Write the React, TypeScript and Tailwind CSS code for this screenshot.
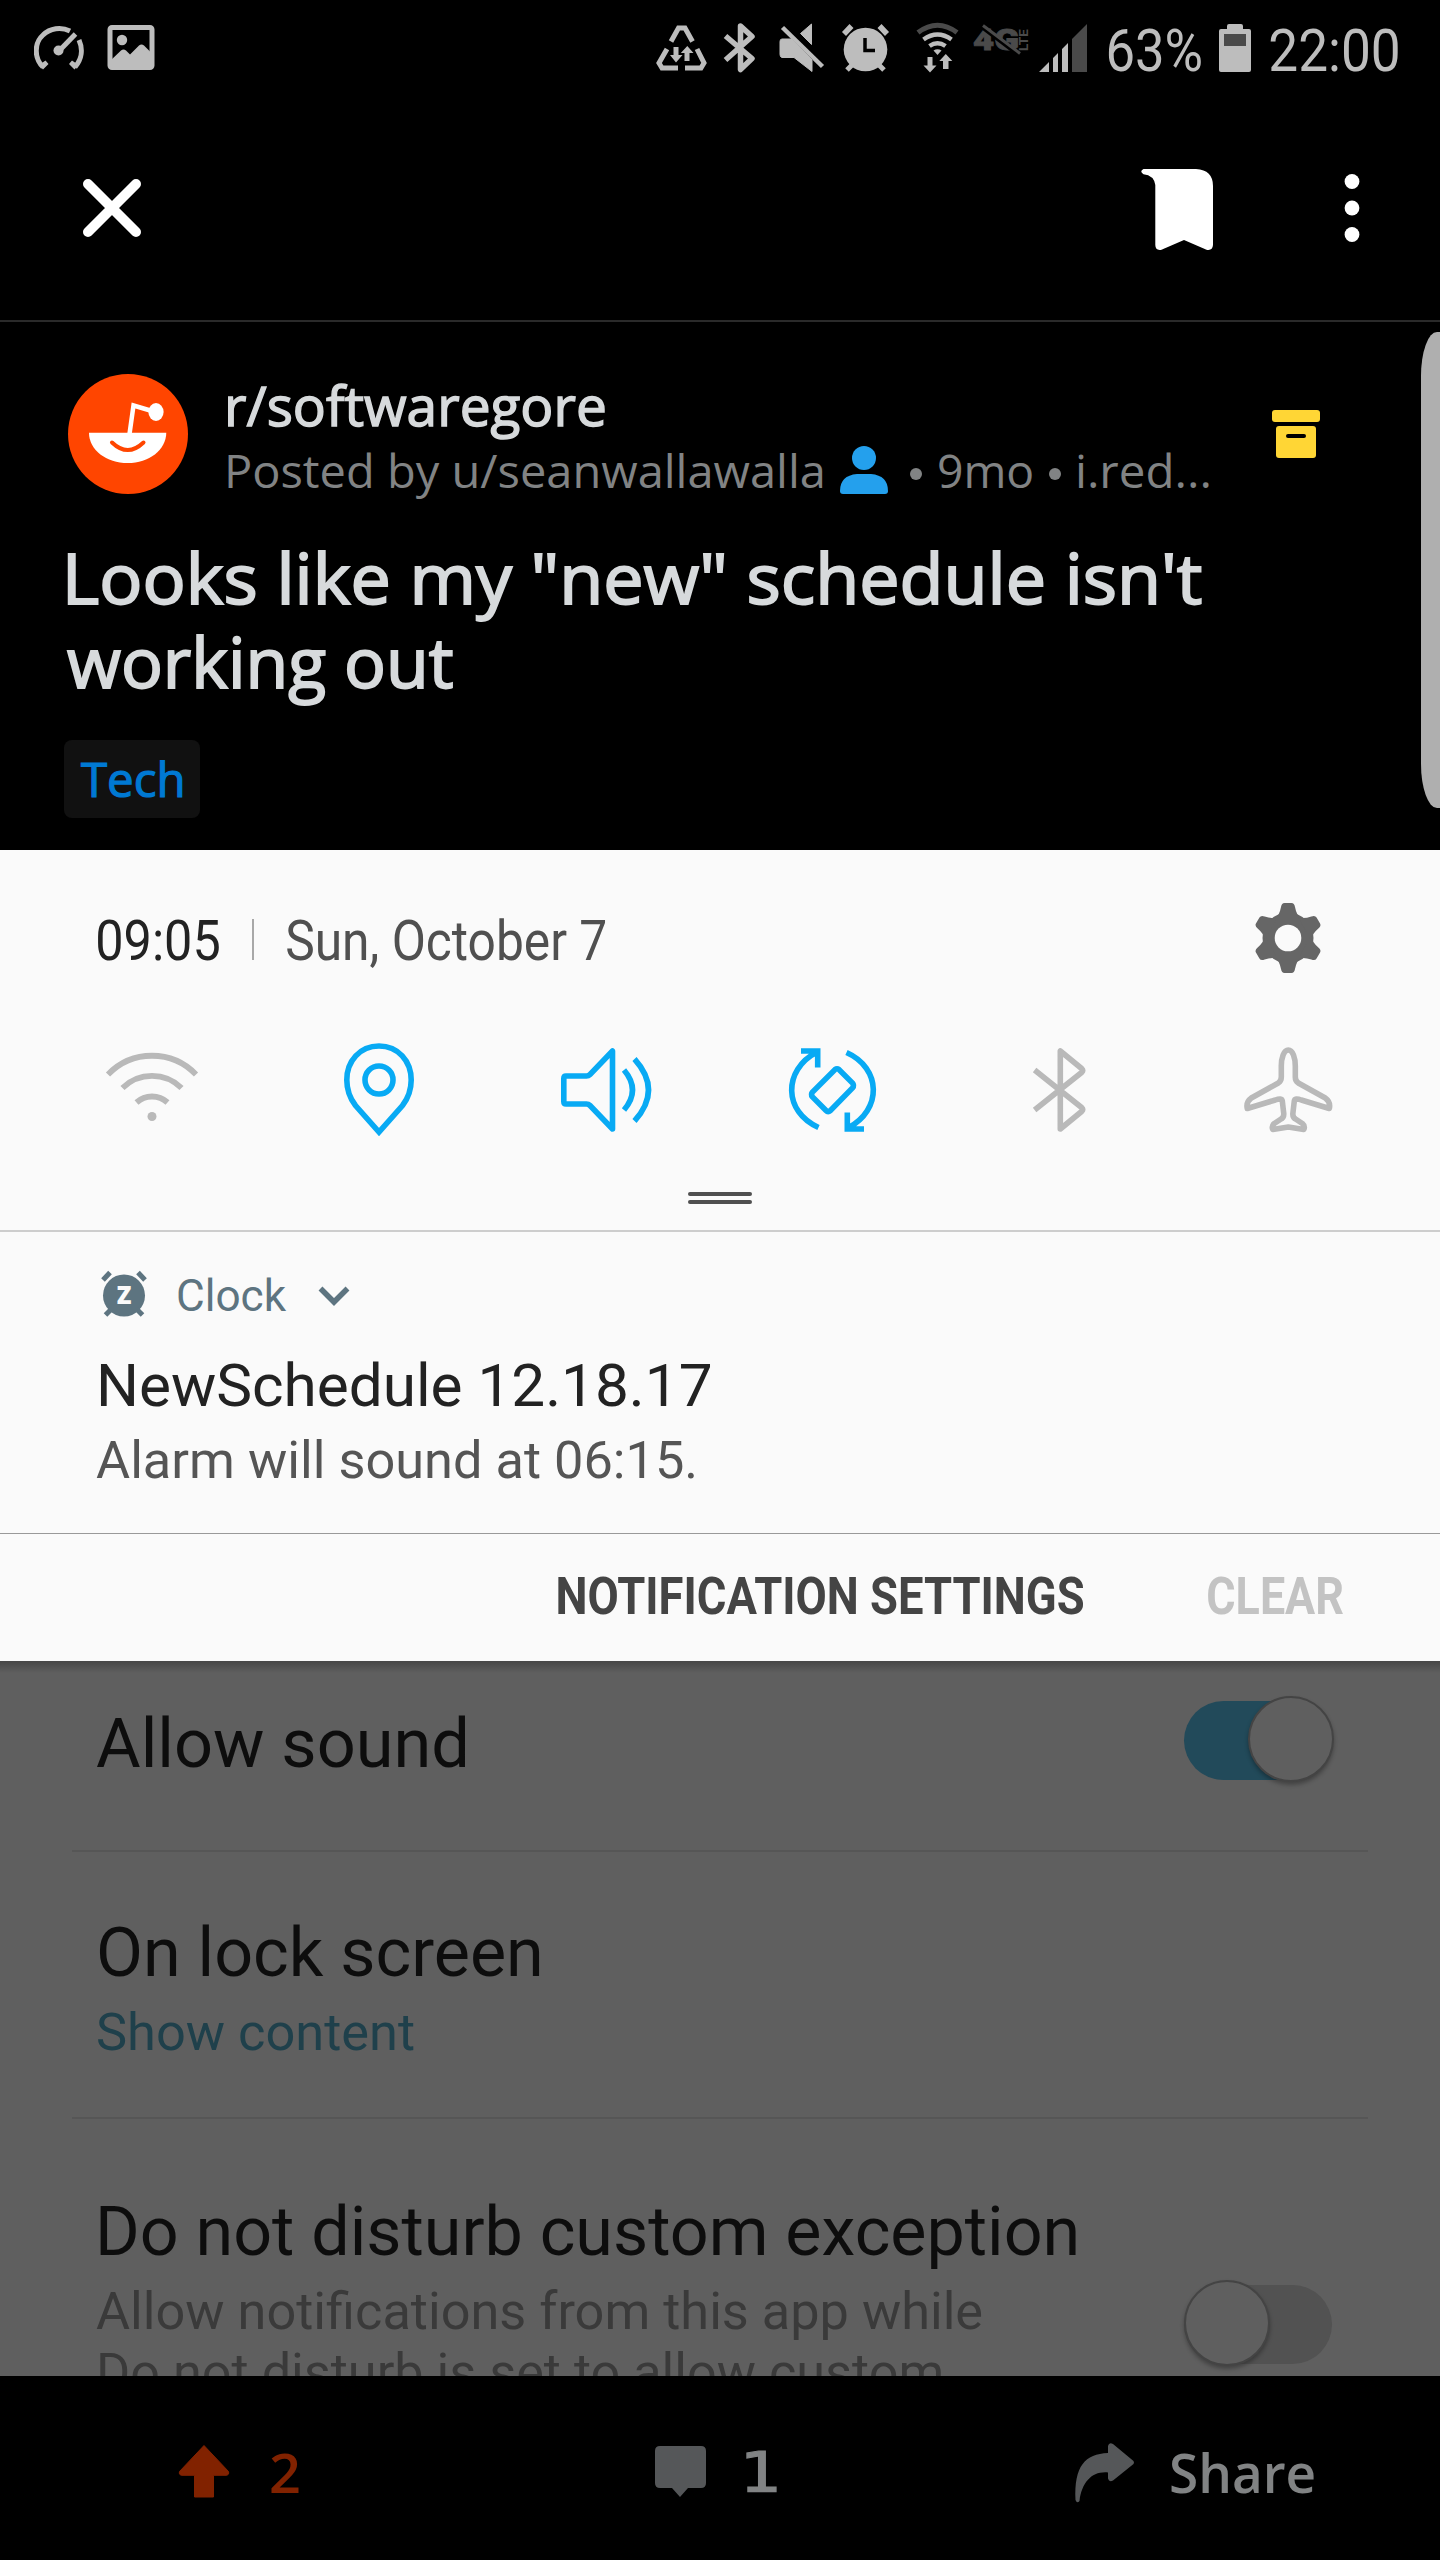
import { useLayoutEffect, useRef, useState } from "react";
import type { ReactNode } from "react";

/** One line of text whose ink is stretched to the full width of its box. */
function Fit({ children, className = "" }: { children: string; className?: string }) {
  const box = useRef<HTMLSpanElement>(null);
  const ink = useRef<HTMLSpanElement>(null);
  const [transform, setTransform] = useState("none");

  useLayoutEffect(() => {
    const ctx = document.createElement("canvas").getContext("2d");
    if (!box.current || !ink.current || !ctx) return;
    const cs = getComputedStyle(ink.current);
    ctx.font = `${cs.fontWeight} ${cs.fontSize} ${cs.fontFamily}`;
    const m = ctx.measureText(children);
    const ratio = ink.current.offsetWidth / m.width;
    const left = -m.actualBoundingBoxLeft * ratio;
    const right = m.actualBoundingBoxRight * ratio;
    const scale = box.current.offsetWidth / (right - left);
    setTransform(`translateX(${-left * scale}px) scaleX(${scale})`);
  }, [children]);

  return (
    <span ref={box} className={`block shrink-0 whitespace-nowrap ${className}`}>
      <span ref={ink} className="inline-block origin-left" style={{ transform }}>
        {children}
      </span>
    </span>
  );
}

function Icon({ box, className = "", children }: { box: [number, number, number, number]; className?: string; children: ReactNode }) {
  return (
    <svg className={`block shrink-0 ${className}`} width={box[2]} height={box[3]} viewBox={box.join(" ")} fill="none">
      {children}
    </svg>
  );
}

const G = "#bdbdbd";
const D = "#4a4a4a";

function StatusBar() {
  return (
    <div className="flex h-24 items-center bg-black pr-[42px] pl-[34px] text-[#bdbdbd]">
      <Icon box={[34, 20, 50, 56]}>
        <path d="M43 67C34 58 34 43 43 35C50 28 61 26.500 70 31M79 40C83 49 82 59 75 67" stroke={G} strokeWidth="5" />
        <path d="M39 65l4 4.500 5.500-5.500-3-3.500zM78.500 65l-4 4.500-5.500-5.500 3-3.500z" fill={G} />
        <path d="M60 50L75.500 34" stroke={G} strokeWidth="5" />
        <circle cx="58.500" cy="50.500" r="5" fill={G} />
      </Icon>
      <Icon box={[107, 20, 48, 56]} className="ml-[23px]">
        <rect x="110" y="27.500" width="42" height="40" rx="2" stroke={G} strokeWidth="5" />
        <circle cx="122" cy="40" r="5.200" fill={G} />
        <path d="M110 61l11-10.500q2.500-2 5 0l4 4 9-9q2.500-2 5 0l8 8V68H110z" fill={G} />
      </Icon>

      <Icon box={[656, 20, 52, 56]} className="ml-auto">
        <path d="M671 41.500l7.500-13.500h6.500l7.500 13.500M667 49l-8 14 3 5h16M697 49l7 14-3 5h-16" stroke={G} strokeWidth="5" />
        <path d="M673.500 47h5v8h4l-6.500 7.500-6-7.500h3.500zM684.500 61h5V53h4L687.300 46l-6.500 7h3.700z" fill={G} />
      </Icon>
      <Icon box={[722, 20, 36, 56]} className="ml-[14px]">
        <path d="M725.500 36L752 58.500 740.500 69.500V26L752 36.500 725.500 60" stroke={G} strokeWidth="5.500" strokeLinejoin="round" />
      </Icon>
      <Icon box={[778, 20, 48, 56]} className="ml-5">
        <path d="M811.500 24v20.500L800.500 33.500zM782 39h9l21 21v11.500L794 57.500h-12q-2-.5-2-3V41.500q0-2.500 2-2.500z" fill={G} strokeLinejoin="round" stroke={G} strokeWidth="1" />
        <path d="M782.500 27.500L822.500 66.500" stroke={G} strokeWidth="4.500" />
      </Icon>
      <Icon box={[840, 20, 52, 56]} className="ml-[14px]">
        <circle cx="865.500" cy="49.500" r="21.800" fill={G} />
        <path d="M844 34l7.500-8M887 34l-7.500-8" stroke={G} strokeWidth="5.500" />
        <path d="M847 70l6-6M884 70l-6-6" stroke={G} strokeWidth="5" />
        <path d="M865 38v12.500h10" stroke="#000" strokeWidth="3.500" />
      </Icon>
      <Icon box={[914, 20, 48, 56]} className="ml-[22px]">
        <path d="M918 32.500Q937.500 18 957 32.500" stroke={D} strokeWidth="5" />
        <path d="M923.500 39.500Q937.500 29.500 951.500 39.500" stroke={G} strokeWidth="4.500" />
        <path d="M929.500 46Q937.500 40.500 945.500 46" stroke={G} strokeWidth="4.500" />
        <path d="M933.500 50.500q4-2.500 8 0l-4 4.500z" fill={G} />
        <path d="M927.500 57h5v8.500h4l-6.500 7-6.500-7h4zM943 69h5.500v-8h3.800l-6.500-7-6.500 7h3.700z" fill={G} />
      </Icon>
      <Icon box={[972, 20, 58, 56]} className="ml-[10px]">
        <text x="973" y="50" fill={D} stroke={D} strokeWidth="0.800" fontFamily="Roboto" fontWeight="900" fontSize="30" textLength="46" lengthAdjust="spacingAndGlyphs">4G</text>
        <text transform="translate(1027.500 51) rotate(-90)" fill={D} fontFamily="Roboto" fontWeight="700" fontSize="12" textLength="22" lengthAdjust="spacingAndGlyphs">LTE</text>
        <path d="M983 28.500L1018 55" stroke="#000" strokeWidth="3" />
        <path d="M983 25.500L1020 53.500" stroke={D} strokeWidth="3" />
      </Icon>
      <Icon box={[1038, 20, 52, 56]} className="ml-2">
        <path d="M1039 72l10-10v10zM1053 72V58l5-5v19zM1062 72V49l6-6v29z" fill={G} />
        <path d="M1072 72V39l15-15v48z" fill={D} />
      </Icon>
      <Fit className="ml-[18px] w-[93px] pt-[5px] text-[60px] leading-[60px]">63%</Fit>
      <Icon box={[1218, 20, 34, 56]} className="ml-[17px]">
        <path d="M1227 29v-3q0-2 2-2h12q2 0 2 2v3h6q2 0 2 2v39q0 2-2 2h-28q-2 0-2-2V31q0-2 2-2z" fill={G} />
        <rect x="1224" y="34" width="22" height="12" fill={D} />
      </Icon>
      <Fit className="ml-[18px] w-[128px] pt-[5px] text-[60px] leading-[60px]">22:00</Fit>
    </div>
  );
}

function AppBar() {
  return (
    <div className="flex h-[226px] items-center border-b-2 border-[#2a2a2a] bg-black pr-[76px] pl-20">
      <Icon box={[80, 176, 64, 64]}>
        <path d="M88 184l48 48M136 184l-48 48" stroke="#fff" strokeWidth="10" strokeLinecap="round" />
      </Icon>
      <Icon box={[1140, 164, 76, 88]} className="ml-auto">
        <path d="M1143.500 169H1196Q1213 170 1213 186V245Q1212.500 251 1206.500 249.700L1184 240 1161.500 249.700Q1155.500 251 1155.300 245V185Q1154 175.500 1143.500 174.300 1139 171.500 1143.500 169z" fill="#fff" />
      </Icon>
      <Icon box={[1340, 164, 24, 88]} className="ml-[124px]">
        <circle cx="1352" cy="181.500" r="7.400" fill="#fff" />
        <circle cx="1352" cy="208" r="7.400" fill="#fff" />
        <circle cx="1352" cy="234.500" r="7.400" fill="#fff" />
      </Icon>
    </div>
  );
}

function Post() {
  return (
    <div className="relative h-[528px] bg-black pt-[52px] font-['Open_Sans',sans-serif]">
      <div className="flex h-[120px] items-center pr-[120px] pl-[68px]">
        <Icon box={[68, 374, 120, 120]}>
          <circle cx="128" cy="434" r="60" fill="#ff4500" />
          <path d="M89 432.700h77.300C166 450 149 463 127.700 463S89 450 89 432.700z" fill="#fff" />
          <path d="M112 442.500Q127.700 457.500 143.500 442.500" stroke="#ff4500" strokeWidth="4" strokeLinecap="round" />
          <path d="M129.500 434L133.500 405.500 152 411" stroke="#fff" strokeWidth="4.500" />
          <ellipse cx="156" cy="412" rx="7.600" ry="9" fill="#fff" />
        </Icon>
        <div className="-mt-px ml-10 h-[121px]">
          <Fit className="w-[377px] text-[55px] leading-[64px] text-[#d7dadc] [-webkit-text-stroke:1.4px_#d7dadc]">r/softwaregore</Fit>
          <div className="mt-[3px] flex items-center text-[46px] leading-[60px] text-[#818384]">
            <Fit className="w-[594px]">Posted by u/seanwallawalla</Fit>
            <Icon box={[840, 446, 48, 48]} className="ml-[18px]">
              <circle cx="864" cy="458" r="12" fill="#24a0ed" />
              <path d="M857 474h14q17 1.500 17 17 0 3-3 3H843q-3 0-3-3 0-15.500 17-17z" fill="#24a0ed" />
            </Icon>
            <span className="mt-[7px] ml-[22px] size-3 rounded-full bg-[#818384]" />
            <Fit className="ml-[17px] w-[94px]">9mo</Fit>
            <span className="mt-[7px] ml-4 size-3 rounded-full bg-[#818384]" />
            <Fit className="ml-[17px] w-[131px]">i.red...</Fit>
          </div>
        </div>
        <Icon box={[1272, 410, 48, 48]} className="ml-auto">
          <rect x="1272" y="410" width="48" height="12" rx="3" fill="#ffd635" />
          <rect x="1276" y="426" width="40" height="32" rx="3" fill="#ffd635" />
          <rect x="1286" y="434" width="20" height="4" rx="2" fill="#000" />
        </Icon>
      </div>
      <h1 className="mt-[41px] text-[70px] leading-[84px] text-[#d7dadc] [-webkit-text-stroke:1.900px_#d7dadc]">
        <Fit className="ml-[68px] w-[1134px]">Looks like my "new" schedule isn't</Fit>
        <Fit className="ml-[67px] w-[386px]">working out</Fit>
      </h1>
      <div className="mt-[37px] ml-16 h-[78px] w-[136px] rounded-lg bg-[#111111] pl-[17px]">
        <Fit className="w-[101px] text-[47px] leading-[78px] text-[#0079d3] [-webkit-text-stroke:1.200px_#0079d3]">Tech</Fit>
      </div>
      <div className="absolute top-[10px] right-0 h-[476px] w-[19px] rounded-l-[16px_44px] bg-[#afafaf]" />
    </div>
  );
}

const ON = "#08aaf4";
const OFF = "#b9b9b9";

function Shade() {
  return (
    <div className="h-[811px] bg-[#fafafa]">
      <div className="flex h-[132px] items-center pt-11 pr-[116px] pl-[98px] text-[56px] leading-[56px]">
        <Fit className="w-[121px] pt-[6px] text-[#222222]">09:05</Fit>
        <span className="mt-[3px] ml-[33px] h-[41px] w-[2px] bg-[#a8a8a8]" />
        <Fit className="ml-[33px] w-[319px] pt-[6px] text-[#505050]">Sun, October 7</Fit>
        <Icon box={[-36, -36, 72, 72]} className="ml-auto">
          <g fill="#666">
            <circle r="25.500" />
            {[0, 60, 120, 180, 240, 300].map((a) => (
              <path key={a} transform={`rotate(${a})`} d="M-13-19Q-8.500-23-7-31-6.300-35-3.500-35H3.500Q6.300-35 7-31 8.500-23 13-19z" />
            ))}
          </g>
          <circle r="13.300" fill="#fafafa" />
        </Icon>
      </div>

      <div className="mt-[58px] flex justify-between pr-[101px] pl-[102px]">
        <Icon box={[102, 1040, 100, 100]}>
          <g stroke={OFF} strokeWidth="5.800">
            <path d="M108 1074.500A61 61 0 0 1 196 1074.500" />
            <path d="M122.500 1088A42 42 0 0 1 181.500 1088" />
            <path d="M136.500 1102.500A23 23 0 0 1 167.500 1102.500" />
          </g>
          <circle cx="152" cy="1116.500" r="4.500" fill={OFF} />
        </Icon>
        <Icon box={[329, 1040, 100, 100]}>
          <path d="M379 1046C360 1046 346.800 1061 346.800 1080 346.800 1091 350.500 1099 355.500 1105.500L379 1132 402.500 1105.500C407.500 1099 411.200 1091 411.200 1080 411.200 1061 398 1046 379 1046z" stroke={ON} strokeWidth="5.600" />
          <circle cx="379" cy="1080" r="14" stroke={ON} strokeWidth="5.600" />
        </Icon>
        <Icon box={[557, 1040, 100, 100]}>
          <path d="M566 1076H586.500Q588.500 1076 590 1074.500L612.500 1051V1129L590 1105.500Q588.500 1104 586.500 1104H566Q563.800 1104 563.800 1101.500V1078.500Q563.800 1076 566 1076z" stroke={ON} strokeWidth="5.600" strokeLinejoin="round" />
          <path d="M624 1070Q641 1090 624 1110M634.500 1059Q662.500 1090 634.500 1121" stroke={ON} strokeWidth="5.600" />
        </Icon>
        <Icon box={[784.5, 1040, 100, 100]}>
          <g stroke={ON} strokeWidth="5.600">
            <path d="M801.500 1051H818.200V1067.500M817.500 1052C783 1070 784 1112 819 1127.500" />
            <path d="M864.500 1129H847.800V1112.500M848.500 1128C883 1110 882 1068 847 1052.500" />
            <path d="M835.500 1069.500Q837.500 1068 839.500 1069.500L853 1083Q855 1085.500 853 1088L831 1110.500Q828.500 1112.500 826.500 1110.500L813 1097Q811 1094.500 813 1092z" />
          </g>
        </Icon>
        <Icon box={[1012.4, 1040, 100, 100]}>
          <path d="M1035 1110L1060 1090 1082 1072.500Q1084 1070.500 1082 1068.500L1060.700 1051V1129L1082 1111.500Q1084 1109.500 1082 1107.500L1060 1090 1035 1070" stroke={OFF} strokeWidth="5.600" strokeLinejoin="round" />
        </Icon>
        <Icon box={[1239.7, 1040, 100, 100]}>
          <path d="M1289 1050C1284.500 1050 1282 1058 1282 1066V1077Q1282 1081 1279 1083L1252 1098Q1246.500 1102 1248 1108.500L1276 1100Q1282.500 1097.500 1283 1101L1284.500 1114Q1284.500 1118 1281 1119.500L1275 1123.500Q1272 1126 1273.500 1129.500L1289 1127 1304.500 1129.500Q1306 1126 1303 1123.500L1297 1119.500Q1293.500 1118 1293.500 1114L1295 1101Q1295.500 1097.500 1302 1100L1330 1108.500Q1331.500 1102 1326 1098L1299 1083Q1296 1081 1296 1077V1066C1296 1058 1293.500 1050 1289 1050z" stroke={OFF} strokeWidth="5.600" strokeLinejoin="round" />
        </Icon>
      </div>

      <div className="mt-[52px] flex flex-col items-center gap-1">
        <span className="h-1 w-16 rounded-full bg-[#4f4f4f]" />
        <span className="h-1 w-16 rounded-full bg-[#4f4f4f]" />
      </div>
      <div className="mt-[26px] h-[2px] bg-[#cdcdcd]" />

      <div className="flex h-[92px] items-center pt-8 pl-[98px] text-[#5d7480]">
        <Icon box={[98, 1268, 52, 52]}>
          <circle cx="124" cy="1295.500" r="21" fill="#5d7480" />
          <path d="M103 1280l7-7.500M145 1280l-7-7.500M105.500 1315l6-6M142.500 1315l-6-6" stroke="#5d7480" strokeWidth="5" />
          <text x="124" y="1304" textAnchor="middle" fill="#fafafa" fontFamily="Open Sans" fontWeight="800" fontSize="24">Z</text>
        </Icon>
        <Fit className="ml-7 w-[109px] pt-[4px] text-[44px] leading-[44px]">Clock</Fit>
        <Icon box={[314, 1278, 40, 40]} className="ml-[27px]">
          <path d="M320.500 1292.500l13.500 13.500 13.500-13.500" stroke="#5d7480" strokeWidth="5.500" />
        </Icon>
      </div>
      <Fit className="mt-[27px] ml-[100px] w-[611px] text-[60px] leading-[70px] text-[#222222]">NewSchedule 12.18.17</Fit>
      <Fit className="mt-2 ml-[96px] w-[598px] text-[52px] leading-[64px] text-[#555555]">Alarm will sound at 06:15.</Fit>

      <div className="mt-[40px] flex h-[128px] items-center justify-end gap-[124px] border-t border-[#999999] pr-[96px] pb-px text-[52px] leading-[60px] font-bold">
        <Fit className="w-[526px] text-[#444444]">NOTIFICATION SETTINGS</Fit>
        <Fit className="w-[136px] text-[#c3c3c3]">CLEAR</Fit>
      </div>
    </div>
  );
}

function Toggle({ on }: { on: boolean }) {
  return (
    <div className={on ? "flex h-[86px] w-[150px] shrink-0 items-center justify-end" : "flex h-[86px] w-[150px] shrink-0 items-center"}>
      <div className={on ? "mt-[3px] mr-[2px] flex h-[79px] w-[148px] items-center justify-end rounded-full bg-[#224a5a]" : "mt-[3px] flex h-[79px] w-[148px] items-center rounded-full bg-[#525252]"}>
        <span className={on ? "-mt-[3px] -mr-[2px] size-[86px] shrink-0 rounded-full border-2 border-[#444444] bg-[#5f5f5f] shadow-[0_3px_4px_rgba(0,0,0,0.3)]" : "-mt-[3px] size-[86px] shrink-0 rounded-full border-2 border-[#444444] bg-[#5f5f5f] shadow-[0_3px_4px_rgba(0,0,0,0.3)]"} />
      </div>
    </div>
  );
}

function Settings() {
  return (
    <div className="relative h-[715px] overflow-hidden bg-[#5f5f5f] px-[72px] text-[68px] leading-[80px] text-[#0d0d0d]">
      <div className="absolute inset-x-0 top-0 h-3 bg-linear-to-b from-[#474747] to-[#5f5f5f]" />
      <div className="relative flex h-[191px] items-start justify-between border-b-2 border-[#565656] pt-[35px] pr-[34px] pl-[24px]">
        <Fit className="mt-2 w-[369px]">Allow sound</Fit>
        <Toggle on />
      </div>
      <div className="h-[267px] border-b-2 border-[#565656] pt-[61px] pl-[27px]">
        <Fit className="w-[440px]">On lock screen</Fit>
        <Fit className="mt-2 -ml-px w-[316px] text-[52px] leading-[64px] text-[#1f404b]">Show content</Fit>
      </div>
      <div className="flex items-start justify-between pt-[73px] pr-[34px]">
        <div className="w-[1004px] shrink-0 pl-[28px]">
          <Fit className="w-[976px]">Do not disturb custom exception</Fit>
          <div className="mt-[9px] text-[52px] leading-[61px] text-[#3a3a3a]">
            <Fit className="-ml-1 w-[886px]">Allow notifications from this app while</Fit>
            <Fit className="w-[842px]">Do not disturb is set to allow custom</Fit>
          </div>
        </div>
        <div className="mt-[88px]">
          <Toggle on={false} />
        </div>
      </div>
    </div>
  );
}

function ActionBar() {
  return (
    <div className="flex h-[184px] items-center bg-black pt-2 pl-[176px] font-['Open_Sans',sans-serif] text-[55px] leading-[60px] font-semibold text-[#818384]">
      <Icon box={[176, 2444, 56, 56]}>
        <path d="M204 2445.500L228.500 2471.500Q229.500 2475 226 2475.300H213.500V2497H194.500V2475.300H182Q178.500 2475 179.500 2471.500z" fill="#812200" stroke="#812200" strokeLinejoin="round" />
      </Icon>
      <Fit className="ml-[39px] w-[28px] text-[#812200]">2</Fit>
      <Icon box={[652, 2444, 56, 56]} className="ml-[353px]">
        <path d="M660 2446h41q5 0 5 5v32q0 5-5 5h-13l-8 9-8-9h-12q-5 0-5-5v-32q0-5 5-5z" fill="#555759" />
      </Icon>
      <Fit className="mb-[1px] ml-[39px] w-[29px] font-['DejaVu_Sans',sans-serif] font-normal [-webkit-text-stroke:1.200px_#818384]">1</Fit>
      <Icon box={[1072, 2440, 64, 64]} className="ml-[296px]">
        <path d="M1108 2453V2446Q1109 2442 1113 2444L1133.500 2461Q1134.500 2462.500 1133.500 2464L1113 2480.500Q1109 2482.500 1108 2478.500V2472.500C1092 2471 1082 2482 1079.500 2501Q1077 2504 1075.500 2500C1074 2466 1085 2454 1108 2453z" fill="#555759" />
      </Icon>
      <Fit className="ml-[35px] w-[144px]">Share</Fit>
    </div>
  );
}

export default function App() {
  return (
    <main className="h-[2560px] w-[1440px] overflow-hidden bg-black font-[Roboto,sans-serif]">
      <StatusBar />
      <AppBar />
      <Post />
      <Shade />
      <Settings />
      <ActionBar />
    </main>
  );
}
